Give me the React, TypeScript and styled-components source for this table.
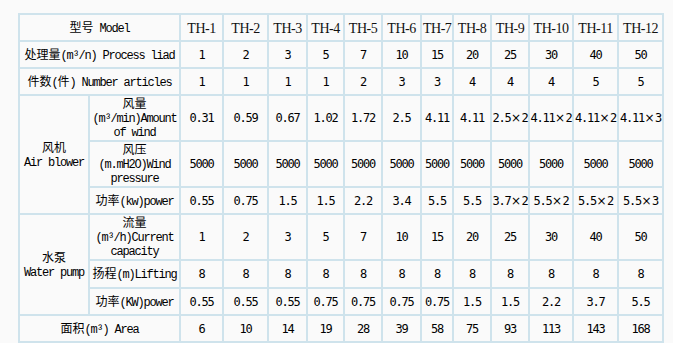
import * as React from "react"
import styled, {createGlobalStyle} from "styled-components";

const BORDER = '#cfe3ec'

const models = ['TH-1', 'TH-2', 'TH-3', 'TH-4', 'TH-5', 'TH-6', 'TH-7', 'TH-8', 'TH-9', 'TH-10', 'TH-11', 'TH-12']
const widths = [70, 91, 43, 45, 39, 37, 38, 39, 32, 38, 38, 44, 45, 45]

const data = {
  process: ['1', '2', '3', '5', '7', '10', '15', '20', '25', '30', '40', '50'],
  articles: ['1', '1', '1', '1', '2', '3', '3', '4', '4', '4', '5', '5'],
  wind: ['0.31', '0.59', '0.67', '1.02', '1.72', '2.5', '4.11', '4.11', '2.5×2', '4.11×2', '4.11×2', '4.11×3'],
  pressure: Array(12).fill('5000'),
  blowerPower: ['0.55', '0.75', '1.5', '1.5', '2.2', '3.4', '5.5', '5.5', '3.7×2', '5.5×2', '5.5×2', '5.5×3'],
  flow: ['1', '2', '3', '5', '7', '10', '15', '20', '25', '30', '40', '50'],
  lifting: Array(12).fill('8'),
  pumpPower: ['0.55', '0.55', '0.55', '0.75', '0.75', '0.75', '0.75', '1.5', '1.5', '2.2', '3.7', '5.5'],
  area: ['6', '10', '14', '19', '28', '39', '58', '75', '93', '113', '143', '168'],
}


const GlobalStyle = createGlobalStyle`
  body {
    margin: 0;
    background: #fafafa;
  }
`

// splits "4.11×2" so the cross gets a wide slot like in the original
function renderValue( value ){
  const parts = value.split('×')
  if( parts.length < 2 ) return value
  return <>{parts[0]}<Cross>×</Cross>{parts[1]}</>
}

const Values = ({values}) => (
  <>
    {values.map((v, i) => <NumCell key={i}>{renderValue(v)}</NumCell>)}
  </>
)


const App = () => {
  return (
    <Page>
      <GlobalStyle />
      <Table>
        <colgroup>
          {widths.map((w, i) => <col key={i} style={{width: w}} />)}
        </colgroup>
        <tbody>
          <Row $h={27}>
            <LabelCell colSpan={2}><Cn>型号</Cn> Model</LabelCell>
            {models.map(m => <HeadCell key={m}>{m}</HeadCell>)}
          </Row>
          <Row $h={27}>
            <LabelCell colSpan={2}><Cn>处理量</Cn>(m³/n) Process liad</LabelCell>
            <Values values={data.process} />
          </Row>
          <Row $h={27}>
            <LabelCell colSpan={2}><Cn>件数</Cn>(<Cn>件</Cn>) Number articles</LabelCell>
            <Values values={data.articles} />
          </Row>
          <Row $h={43}>
            <LabelCell rowSpan={3}><Cn>风机</Cn><br/>Air blower</LabelCell>
            <LabelCell><Cn>风量</Cn><br/>(m³/min)Amount of wind</LabelCell>
            <Values values={data.wind} />
          </Row>
          <Row $h={44}>
            <LabelCell><Cn>风压</Cn><br/>(m.mH2O)Wind pressure</LabelCell>
            <Values values={data.pressure} />
          </Row>
          <Row $h={27}>
            <LabelCell><Cn>功率</Cn>(kw)power</LabelCell>
            <Values values={data.blowerPower} />
          </Row>
          <Row $h={44}>
            <LabelCell rowSpan={3}><Cn>水泵</Cn><br/>Water pump</LabelCell>
            <LabelCell><Cn>流量</Cn><br/>(m³/h)Current capacity</LabelCell>
            <Values values={data.flow} />
          </Row>
          <Row $h={28}>
            <LabelCell><Cn>扬程</Cn>(m)Lifting</LabelCell>
            <Values values={data.lifting} />
          </Row>
          <Row $h={27}>
            <LabelCell><Cn>功率</Cn>(KW)power</LabelCell>
            <Values values={data.pumpPower} />
          </Row>
          <Row $h={27}>
            <LabelCell colSpan={2}><Cn>面积</Cn>(m³) Area</LabelCell>
            <Values values={data.area} />
          </Row>
        </tbody>
      </Table>
    </Page>
  )
}


const Page = styled.div`
  padding: 13px 0 0 18px;
`
const Table = styled.table`
  width: 646px;
  table-layout: fixed;
  border-collapse: separate;
  border-spacing: 0;
  border-top: 2px solid ${BORDER};
  border-left: 2px solid ${BORDER};
`
const Row = styled.tr<{$h: number}>`
  height: ${props => props.$h}px;
`
const Cell = styled.td`
  border-right: 2px solid ${BORDER};
  border-bottom: 2px solid ${BORDER};
  padding: 0 1px;
  text-align: center;
  vertical-align: middle;
  color: #000;
  overflow: visible;
`
const LabelCell = styled(Cell)`
  font: normal normal 400 12px/14px 'Liberation Mono', 'Noto Sans CJK SC', monospace;
  letter-spacing: -1.2px;
`
const HeadCell = styled(Cell)`
  padding-top: 3px;
  font: normal normal 400 14px/16px 'Liberation Serif', serif;
  letter-spacing: -0.5px;
  white-space: nowrap;
  color: #111;
`
const NumCell = styled(Cell)`
  padding: 0;
  font: normal normal 400 12px/14px 'DejaVu Sans Mono', monospace;
  letter-spacing: -1.2px;
  white-space: nowrap;
`
const Cn = styled.span`
  font-family: 'Noto Sans CJK SC', sans-serif;
  letter-spacing: 0;
`
const Cross = styled.span`
  display: inline-block;
  width: 11px;
  text-align: center;
  letter-spacing: 0;
  font-family: 'DejaVu Sans', sans-serif;
`

export default App
